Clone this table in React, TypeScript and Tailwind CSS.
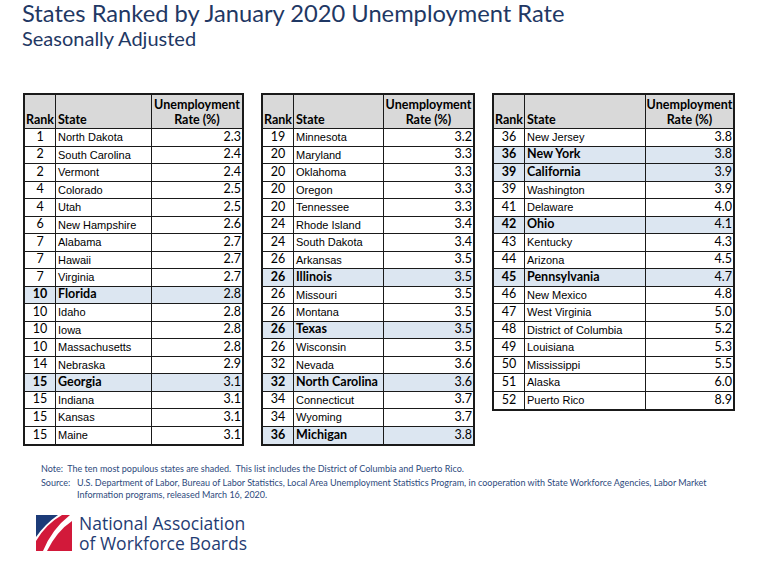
import * as React from "react";

type Row = { rank: number; state: string; rate: string; big?: boolean };

const left: Row[] = [
  { rank: 1, state: "North Dakota", rate: "2.3" },
  { rank: 2, state: "South Carolina", rate: "2.4" },
  { rank: 2, state: "Vermont", rate: "2.4" },
  { rank: 4, state: "Colorado", rate: "2.5" },
  { rank: 4, state: "Utah", rate: "2.5" },
  { rank: 6, state: "New Hampshire", rate: "2.6" },
  { rank: 7, state: "Alabama", rate: "2.7" },
  { rank: 7, state: "Hawaii", rate: "2.7" },
  { rank: 7, state: "Virginia", rate: "2.7" },
  { rank: 10, state: "Florida", rate: "2.8", big: true },
  { rank: 10, state: "Idaho", rate: "2.8" },
  { rank: 10, state: "Iowa", rate: "2.8" },
  { rank: 10, state: "Massachusetts", rate: "2.8" },
  { rank: 14, state: "Nebraska", rate: "2.9" },
  { rank: 15, state: "Georgia", rate: "3.1", big: true },
  { rank: 15, state: "Indiana", rate: "3.1" },
  { rank: 15, state: "Kansas", rate: "3.1" },
  { rank: 15, state: "Maine", rate: "3.1" },
];

const middle: Row[] = [
  { rank: 19, state: "Minnesota", rate: "3.2" },
  { rank: 20, state: "Maryland", rate: "3.3" },
  { rank: 20, state: "Oklahoma", rate: "3.3" },
  { rank: 20, state: "Oregon", rate: "3.3" },
  { rank: 20, state: "Tennessee", rate: "3.3" },
  { rank: 24, state: "Rhode Island", rate: "3.4" },
  { rank: 24, state: "South Dakota", rate: "3.4" },
  { rank: 26, state: "Arkansas", rate: "3.5" },
  { rank: 26, state: "Illinois", rate: "3.5", big: true },
  { rank: 26, state: "Missouri", rate: "3.5" },
  { rank: 26, state: "Montana", rate: "3.5" },
  { rank: 26, state: "Texas", rate: "3.5", big: true },
  { rank: 26, state: "Wisconsin", rate: "3.5" },
  { rank: 32, state: "Nevada", rate: "3.6" },
  { rank: 32, state: "North Carolina", rate: "3.6", big: true },
  { rank: 34, state: "Connecticut", rate: "3.7" },
  { rank: 34, state: "Wyoming", rate: "3.7" },
  { rank: 36, state: "Michigan", rate: "3.8", big: true },
];

const right: Row[] = [
  { rank: 36, state: "New Jersey", rate: "3.8" },
  { rank: 36, state: "New York", rate: "3.8", big: true },
  { rank: 39, state: "California", rate: "3.9", big: true },
  { rank: 39, state: "Washington", rate: "3.9" },
  { rank: 41, state: "Delaware", rate: "4.0" },
  { rank: 42, state: "Ohio", rate: "4.1", big: true },
  { rank: 43, state: "Kentucky", rate: "4.3" },
  { rank: 44, state: "Arizona", rate: "4.5" },
  { rank: 45, state: "Pennsylvania", rate: "4.7", big: true },
  { rank: 46, state: "New Mexico", rate: "4.8" },
  { rank: 47, state: "West Virginia", rate: "5.0" },
  { rank: 48, state: "District of Columbia", rate: "5.2" },
  { rank: 49, state: "Louisiana", rate: "5.3" },
  { rank: 50, state: "Mississippi", rate: "5.5" },
  { rank: 51, state: "Alaska", rate: "6.0" },
  { rank: 52, state: "Puerto Rico", rate: "8.9" },
];

const calibri = "font-['Lato','Liberation_Sans',sans-serif]";
const arial = "font-['Liberation_Sans',Arial,sans-serif]";

function RankTable({ rows, stateW, rateW }: { rows: Row[]; stateW: string; rateW: string }) {
  return (
    <div className="border-2 border-[#1a1a1a] self-start">
      <div className="flex h-[34px] bg-[#d9d9d9] border-b border-[#1a1a1a] text-[12.5px] font-bold leading-[15px] text-black">
        <div className={`${calibri} w-[31px] border-r border-[#1a1a1a] flex items-end justify-center pb-[1px]`}>Rank</div>
        <div className={`${calibri} ${stateW} border-r border-[#1a1a1a] flex items-end pl-[2px] pb-[1px]`}>State</div>
        <div className={`${calibri} ${rateW} flex flex-col items-center justify-center pt-[1px]`}>
          <span>Unemployment</span>
          <span>Rate (%)</span>
        </div>
      </div>
      {rows.map((r, i) => (
        <div
          key={r.state}
          className={`flex h-[17.5px] items-center text-black ${i < rows.length - 1 ? "border-b border-[#1a1a1a]" : ""} ${r.big ? "bg-[#dce6f1]" : "bg-white"}`}
        >
          <div className={`${calibri} w-[31px] h-full border-r border-[#1a1a1a] flex items-center justify-center text-[12.5px] ${r.big ? "font-bold" : ""}`}>
            {r.rank}
          </div>
          <div
            className={`${r.big ? `${calibri} font-bold text-[12.5px]` : `${arial} text-[11px]`} ${stateW} h-full border-r border-[#1a1a1a] flex items-center pl-[2px] whitespace-nowrap`}
          >
            {r.state}
          </div>
          <div className={`${calibri} ${rateW} h-full flex items-center justify-end pr-[1px] text-[12.5px]`}>{r.rate}</div>
        </div>
      ))}
    </div>
  );
}

function Logo() {
  return (
    <svg width="36" height="36" viewBox="0 0 36 36" aria-hidden>
      <rect width="36" height="36" fill="#fff" />
      <path d="M0 0 H22 Q9 9 0 22 Z" fill="#1c3b78" />
      <path d="M26 0 H34 Q16 14 7 36 H0 V26 Q10 9 26 0 Z" fill="#d2193a" />
      <path d="M36 6 V36 H11 Q21 16 36 6 Z" fill="#d2193a" />
    </svg>
  );
}

export default function App() {
  return (
    <div className="w-[759px] h-[565px] bg-white overflow-hidden relative">
      <div className={`${calibri} pl-[22px] text-[#1f3864]`}>
        <h1 className="text-[23.7px] leading-[26px]">States Ranked by January 2020 Unemployment Rate</h1>
        <h2 className="text-[20px] leading-[24px]">Seasonally Adjusted</h2>
      </div>

      <div className="flex mt-[43px] pl-[23px] gap-[17px]">
        <RankTable rows={left} stateW="w-[96px]" rateW="w-[90px]" />
        <RankTable rows={middle} stateW="w-[90px]" rateW="w-[89px]" />
        <RankTable rows={right} stateW="w-[121px]" rateW="w-[87px]" />
      </div>

      <div className={`${calibri} pl-[41px] mt-[17px] text-[9px] leading-[12px] text-[#2e4a7d]`}>
        <p>Note:&nbsp; The ten most populous states are shaded.&nbsp; This list includes the District of Columbia and Puerto Rico.</p>
        <div className="flex mt-[2px]">
          <span className="w-[36px] shrink-0">Source:</span>
          <p className="w-[642px]">
            U.S. Department of Labor, Bureau of Labor Statistics, Local Area Unemployment Statistics Program, in cooperation with State Workforce Agencies, Labor Market Information programs, released March 16, 2020.
          </p>
        </div>
      </div>

      <div className="flex items-center gap-[7px] pl-[36px] mt-[12px]">
        <Logo />
        <div className="font-['Open_Sans',sans-serif] text-[17.5px] leading-[20px] text-[#1f3c73]">
          <div>National Association</div>
          <div>of Workforce Boards</div>
        </div>
      </div>
    </div>
  );
}
